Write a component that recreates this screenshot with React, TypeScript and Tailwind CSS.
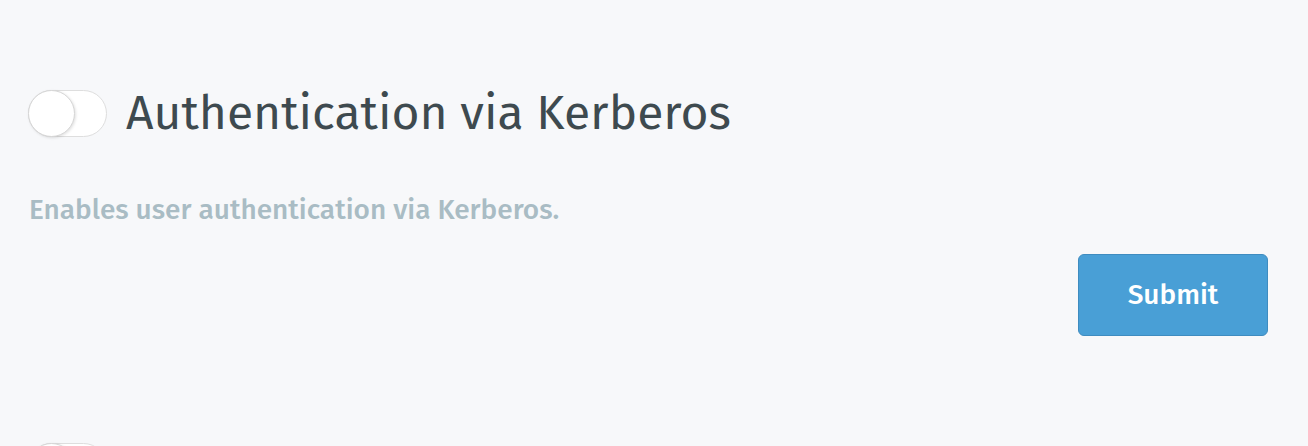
import React, { useState } from "react";

const Toggle: React.FC<{ on: boolean; onChange: () => void }> = ({ on, onChange }) => {
  return (
    <button
      onClick={onChange}
      className={`relative h-[47px] w-[79px] shrink-0 rounded-full border border-[#dedede] ${
        on ? "bg-[#38ae6a]" : "bg-white"
      }`}
    >
      <span
        className={`absolute top-[-1px] h-[47px] w-[47px] rounded-full border border-[#d6d6d6] bg-white shadow-[1px_1px_3px_rgba(0,0,0,0.12)] ${
          on ? "left-[31px]" : "left-[-1px]"
        }`}
      />
    </button>
  );
};

const App: React.FC = () => {
  const [kerberos, setKerberos] = useState(false);
  const [next, setNext] = useState(false);

  return (
    <div
      className="h-[446px] w-full overflow-hidden bg-[#f7f8fa] pl-[28px] pr-[40px] pt-[90px]"
      style={{ fontFamily: '"Fira Sans", "Open Sans", sans-serif' }}
    >
      <div className="flex items-center gap-[19px]">
        <Toggle on={kerberos} onChange={() => setKerberos(!kerberos)} />
        <h2 className="text-[48px] leading-[47px] text-[#3e4a4f]">Authentication via Kerberos</h2>
      </div>

      <p className="mt-[56px] pl-[1px] text-[28px] font-medium leading-[34px] text-[#a9bcc4]">
        Enables user authentication via Kerberos.
      </p>

      <div className="mt-[27px] flex justify-end">
        <button className="h-[82px] w-[190px] rounded-[6px] border border-[#3f8cc0] bg-[#499fd6] text-[28px] font-medium text-white">
          Submit
        </button>
      </div>

      <div className="mt-[107px]">
        <Toggle on={next} onChange={() => setNext(!next)} />
      </div>
    </div>
  );
};

export default App;
